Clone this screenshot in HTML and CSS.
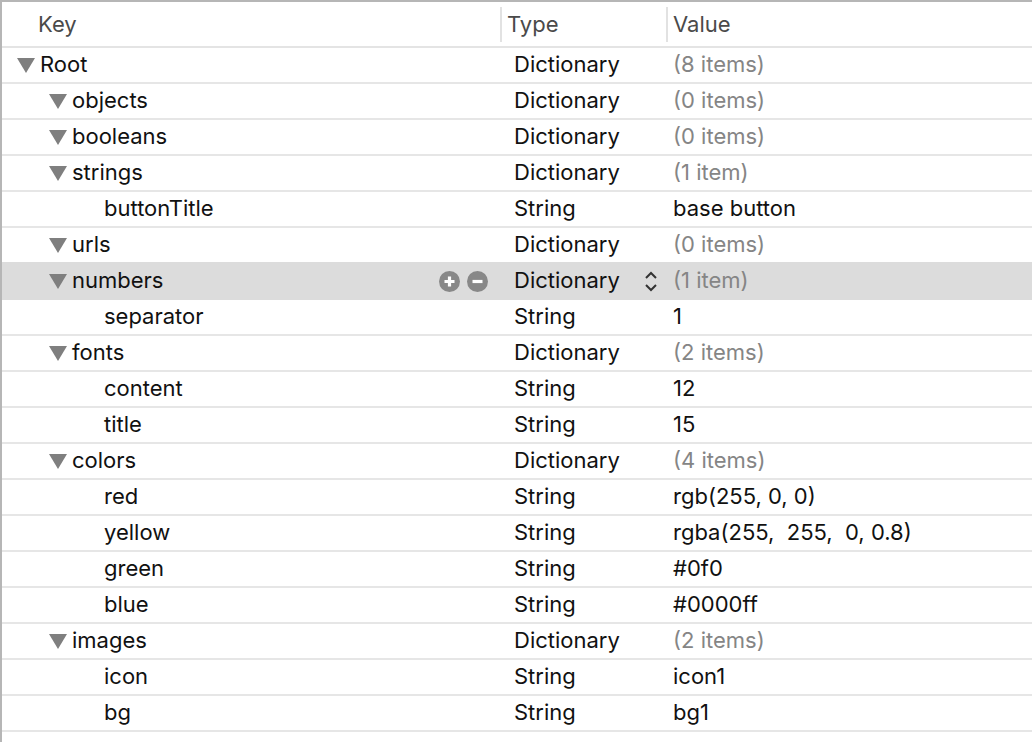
FILE: index.html
```html
<!DOCTYPE html>
<html>
<head>
<meta charset="utf-8">
<link rel="stylesheet" href="styles.css">
</head>
<body>
<div class="outline">
  <div class="header">
    <div class="hcell hkey">Key</div>
    <div class="hcell hsep">Type</div>
    <div class="hcell hsep">Value</div>
  </div>

  <div class="row">
    <div class="key l0"><span class="tri"></span><span>Root</span></div>
    <div class="type"><span>Dictionary</span></div>
    <div class="value muted">(8 items)</div>
  </div>
  <div class="row">
    <div class="key l1"><span class="tri"></span><span>objects</span></div>
    <div class="type"><span>Dictionary</span></div>
    <div class="value muted">(0 items)</div>
  </div>
  <div class="row">
    <div class="key l1"><span class="tri"></span><span>booleans</span></div>
    <div class="type"><span>Dictionary</span></div>
    <div class="value muted">(0 items)</div>
  </div>
  <div class="row">
    <div class="key l1"><span class="tri"></span><span>strings</span></div>
    <div class="type"><span>Dictionary</span></div>
    <div class="value muted">(1 item)</div>
  </div>
  <div class="row">
    <div class="key l2"><span class="nospace"></span><span>buttonTitle</span></div>
    <div class="type"><span>String</span></div>
    <div class="value">base button</div>
  </div>
  <div class="row">
    <div class="key l1"><span class="tri"></span><span>urls</span></div>
    <div class="type"><span>Dictionary</span></div>
    <div class="value muted">(0 items)</div>
  </div>
  <div class="row selected">
    <div class="key l1"><span class="tri"></span><span>numbers</span>
      <span class="btns">
        <svg class="rbtn" width="21" height="21" viewBox="0 0 21 21"><circle cx="10.5" cy="10.5" r="10.5" fill="#888"/><path d="M10.5 5.5v10M5.5 10.5h10" stroke="#fff" stroke-width="3.2"/></svg>
        <svg class="rbtn" width="21" height="21" viewBox="0 0 21 21"><circle cx="10.5" cy="10.5" r="10.5" fill="#888"/><path d="M5.5 10.5h10" stroke="#fff" stroke-width="3.2"/></svg>
      </span>
    </div>
    <div class="type"><span>Dictionary</span>
      <svg class="stepper" width="14" height="25" viewBox="0 0 14 25"><path d="M2 9L7 4l5 5M2 16l5 5 5-5" fill="none" stroke="#333" stroke-width="2"/></svg>
    </div>
    <div class="value muted">(1 item)</div>
  </div>
  <div class="row">
    <div class="key l2"><span class="nospace"></span><span>separator</span></div>
    <div class="type"><span>String</span></div>
    <div class="value">1</div>
  </div>
  <div class="row">
    <div class="key l1"><span class="tri"></span><span>fonts</span></div>
    <div class="type"><span>Dictionary</span></div>
    <div class="value muted">(2 items)</div>
  </div>
  <div class="row">
    <div class="key l2"><span class="nospace"></span><span>content</span></div>
    <div class="type"><span>String</span></div>
    <div class="value">12</div>
  </div>
  <div class="row">
    <div class="key l2"><span class="nospace"></span><span>title</span></div>
    <div class="type"><span>String</span></div>
    <div class="value">15</div>
  </div>
  <div class="row">
    <div class="key l1"><span class="tri"></span><span>colors</span></div>
    <div class="type"><span>Dictionary</span></div>
    <div class="value muted">(4 items)</div>
  </div>
  <div class="row">
    <div class="key l2"><span class="nospace"></span><span>red</span></div>
    <div class="type"><span>String</span></div>
    <div class="value">rgb(255, 0, 0)</div>
  </div>
  <div class="row">
    <div class="key l2"><span class="nospace"></span><span>yellow</span></div>
    <div class="type"><span>String</span></div>
    <div class="value">rgba(255,  255,  0, 0.8)</div>
  </div>
  <div class="row">
    <div class="key l2"><span class="nospace"></span><span>green</span></div>
    <div class="type"><span>String</span></div>
    <div class="value">#0f0</div>
  </div>
  <div class="row">
    <div class="key l2"><span class="nospace"></span><span>blue</span></div>
    <div class="type"><span>String</span></div>
    <div class="value">#0000ff</div>
  </div>
  <div class="row">
    <div class="key l1"><span class="tri"></span><span>images</span></div>
    <div class="type"><span>Dictionary</span></div>
    <div class="value muted">(2 items)</div>
  </div>
  <div class="row">
    <div class="key l2"><span class="nospace"></span><span>icon</span></div>
    <div class="type"><span>String</span></div>
    <div class="value">icon1</div>
  </div>
  <div class="row">
    <div class="key l2"><span class="nospace"></span><span>bg</span></div>
    <div class="type"><span>String</span></div>
    <div class="value">bg1</div>
  </div>
</div>
</body>
</html>
```

FILE: styles.css
```css
html, body {
  margin: 0;
  padding: 0;
  background: #fff;
}
body {
  font-family: Inter, "Liberation Sans", sans-serif;
  font-size: 22px;
  color: #111;
  height: 742px;
  overflow: hidden;
}
.outline {
  border-top: 2px solid #b6b6b6;
  border-left: 2px solid #b6b6b6;
  height: 740px;
}
.header {
  display: grid;
  grid-template-columns: 498px 166px 1fr;
  align-items: center;
  height: 44px;
  border-bottom: 2px solid #e4e4e4;
  color: #4a4a4a;
}
.hcell {
  white-space: nowrap;
}
.hkey {
  padding-left: 36px;
}
.hsep {
  border-left: 2px solid #e2e2e2;
  height: 35px;
  line-height: 35px;
  padding-left: 5px;
  margin-top: 1px;
}
.row {
  display: grid;
  grid-template-columns: 498px 166px 1fr;
  height: 32px;
  padding-bottom: 2px;
  line-height: 32px;
  border-bottom: 2px solid #e6e6e6;
}
.row.selected {
  background: #dcdcdc;
  border-bottom-color: #dcdcdc;
  box-shadow: 0 -2px 0 #dcdcdc;
}
.key {
  display: flex;
  align-items: center;
  white-space: nowrap;
}
.key.l0 { padding-left: 15px; }
.key.l1 { padding-left: 47px; }
.key.l2 { padding-left: 79px; }
.tri {
  width: 0;
  height: 0;
  border-left: 9px solid transparent;
  border-right: 9px solid transparent;
  border-top: 15px solid #7f7f7f;
  margin-right: 5px;
  margin-top: 2px;
}
.nospace {
  width: 18px;
  margin-right: 5px;
}
.btns {
  margin-left: auto;
  margin-right: 12px;
  display: flex;
  gap: 7px;
  align-items: center;
  margin-top: 2px;
}
.rbtn {
  display: block;
}
.type {
  display: flex;
  align-items: center;
  padding-left: 14px;
  white-space: nowrap;
}
.stepper {
  margin-left: auto;
  margin-right: 8px;
  margin-top: 3px;
  display: block;
}
.value {
  padding-left: 7px;
  white-space: pre;
}
.muted {
  color: #858585;
}
```
